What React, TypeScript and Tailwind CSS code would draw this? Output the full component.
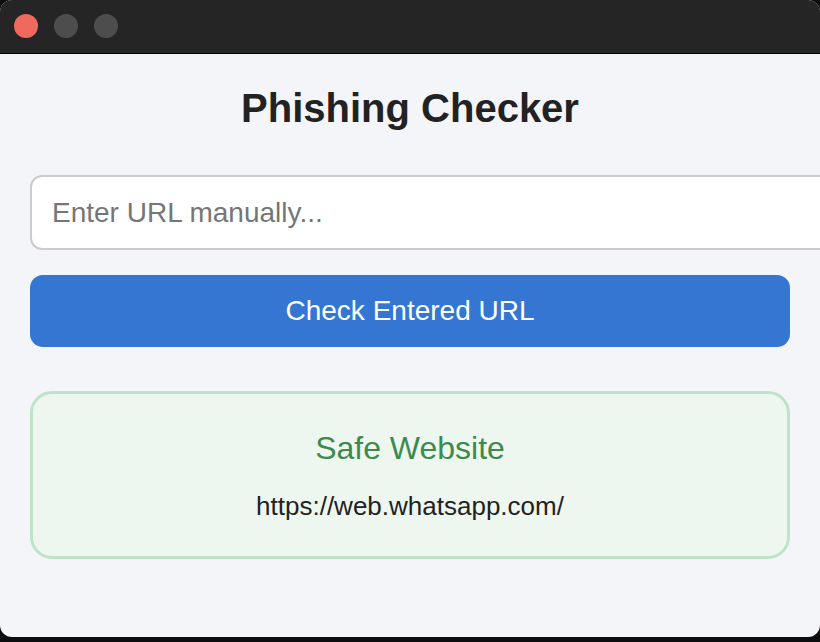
import React, { useState } from 'react';

const App: React.FC = () => {
  const [url, setUrl] = useState('');

  return (
    <div className="w-[820px] h-[642px] bg-[#0d0d0d] overflow-hidden" style={{ fontFamily: '"Liberation Sans", Arial, sans-serif' }}>
      <div className="h-[637px] flex flex-col rounded-t-[12px] rounded-b-[12px] overflow-hidden bg-[#f4f5f9]">
        {/* title bar */}
        <div className="h-[54px] shrink-0 bg-[#252525] border-b border-black flex items-center gap-4 pl-[14px] pb-px">
          <span className="w-6 h-6 rounded-full bg-[#ee6a5f]" />
          <span className="w-6 h-6 rounded-full bg-[#4d4d4d]" />
          <span className="w-6 h-6 rounded-full bg-[#4d4d4d]" />
        </div>

        <div className="flex-1 px-[30px] pt-[31px]">
          <h1 className="text-center text-[40px] leading-[46px] font-bold text-[#222]">Phishing Checker</h1>

          <input
            value={url}
            onChange={e => setUrl(e.target.value)}
            placeholder="Enter URL manually..."
            className="mt-[44px] block w-[804px] h-[75px] px-[20px] bg-white border-2 border-[#cbcbcf] rounded-[12px] text-[28px] text-[#222] placeholder:text-[#767676] outline-none"
          />

          <button className="mt-[25px] w-full h-[72px] rounded-[13px] bg-[#3476d2] text-white text-[28px]">
            Check Entered URL
          </button>

          <div className="mt-[44px] h-[168px] border-[3px] border-[#bfe3c9] bg-[#edf7ef] rounded-[22px] flex flex-col items-center pt-[36px]">
            <div className="text-[32px] leading-[37px] text-[#3d8a4f]">Safe Website</div>
            <div className="mt-[24px] text-[26px] leading-[30px] text-[#222]">https://web.whatsapp.com/</div>
          </div>
        </div>
      </div>
    </div>
  );
};

export default App;
